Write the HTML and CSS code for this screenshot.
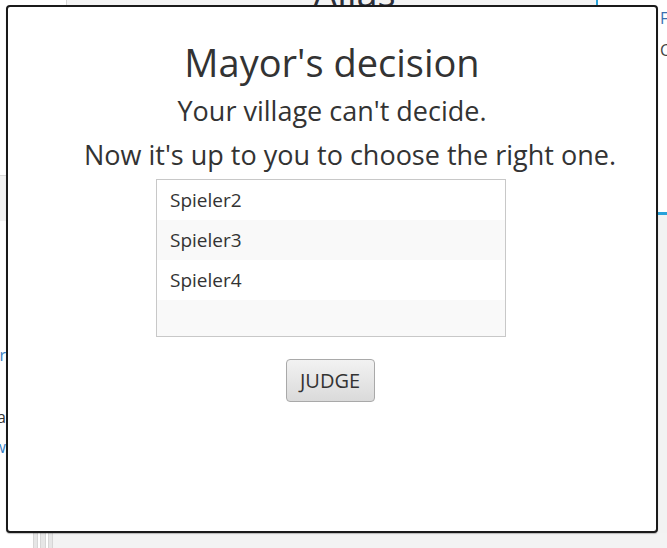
FILE: index.html
```html
<!DOCTYPE html>
<html>
<head>
<meta charset="utf-8">
<link rel="stylesheet" href="styles.css">
</head>
<body>
<div class="backdrop">
  <div class="top-row">
    <div class="seg-white w66"></div>
    <div class="seg-line"></div>
    <div class="seg-gray header"><span class="alias">Alias</span></div>
    <div class="seg-blue"></div>
    <div class="seg-white grow"></div>
  </div>
  <div class="mid-row">
    <div class="left-col">
      <div class="left-panel"></div>
      <div class="frag frag-r">r</div>
      <div class="frag frag-a">a</div>
      <div class="frag frag-w">w</div>
    </div>
    <div class="center-col"></div>
    <div class="right-col">
      <div class="rfrag rfrag-f">F</div>
      <div class="rfrag rfrag-c">C</div>
      <div class="right-spacer"></div>
      <div class="right-blue"></div>
      <div class="right-gray"></div>
    </div>
  </div>
  <div class="bottom-row">
    <div class="seg-white w33"></div>
    <div class="stripes"><i></i><i></i><i></i></div>
    <div class="seg-gray grow"></div>
  </div>
</div>

<div class="dialog">
  <h1 class="title">Mayor's decision</h1>
  <p class="line1">Your village can't decide.</p>
  <p class="line2">Now it's up to you to choose the right one.</p>
  <ul class="list">
    <li class="row">Spieler2</li>
    <li class="row odd">Spieler3</li>
    <li class="row">Spieler4</li>
    <li class="row odd empty"></li>
  </ul>
  <button class="judge">JUDGE</button>
</div>
</body>
</html>
```
FILE: styles.css
```css
* { box-sizing: border-box; }
html, body { margin: 0; padding: 0; }
body {
  width: 667px;
  height: 548px;
  overflow: hidden;
  position: relative;
  background: #fff;
  font-family: "Open Sans", "Noto Sans", sans-serif;
  color: #333;
}

/* backdrop */
.backdrop {
  display: grid;
  grid-template-rows: 5px 528px 15px;
  width: 667px;
  height: 548px;
}
.top-row, .bottom-row, .mid-row { display: flex; overflow: hidden; }
.seg-white { background: #fff; }
.seg-gray { background: #f3f3f3; }
.w66 { width: 66px; }
.w33 { width: 33px; }
.grow { flex: 1; }
.seg-line { width: 1px; background: #d6d6d6; }
.seg-blue { width: 2px; background: #27a2da; }
.header {
  width: 529px;
  display: flex;
  justify-content: center;
  overflow: hidden;
}
.alias {
  font-size: 38px;
  line-height: 38px;
  margin-top: -27px;
  color: #2b2f3a;
  margin-left: 46px;
}

.left-col { width: 6px; display: flex; flex-direction: column; overflow: hidden; }
.left-panel { margin-top: 170px; height: 46px; background: #f2f2f2; border-top: 1px solid #d9d9d9; }
.frag {
  font-size: 16px;
  line-height: 16px;
  display: flex;
  justify-content: flex-end;
  width: 6px;
  overflow: hidden;
}
.frag-r { margin-top: 126px; color: #3b82c4; }
.frag-a { margin-top: 46px; color: #333; }
.frag-w { margin-top: 14px; color: #3b82c4; }
.center-col { width: 652px; }
.right-col { width: 9px; display: flex; flex-direction: column; overflow: hidden; }
.rfrag { font-size: 16px; line-height: 16px; padding-left: 2px; }
.rfrag-f { margin-top: 5px; color: #3b6fb0; }
.rfrag-c { margin-top: 16px; color: #444; }
.right-spacer { height: 154px; }
.right-blue { height: 3px; background: #27a2da; }
.right-gray { flex: 1; background: #f2f2f2; }
.stripes { width: 20px; display: flex; gap: 2px; background: #fff; }
.stripes i { display: block; width: 6px; background: #e6e6e6; border-left: 1px solid #d6d6d6; border-right: 1px solid #d6d6d6; }

/* dialog */
.dialog {
  position: absolute;
  left: 6px;
  top: 5px;
  width: 652px;
  height: 528px;
  background: #fff;
  border: 2px solid #1a1a1a;
  border-radius: 4px;
  box-shadow: 0 1px 1px rgba(0,0,0,0.25);
  display: flex;
  flex-direction: column;
  align-items: center;
  padding-top: 31px;
}
.title {
  margin: 0;
  font-weight: 400;
  font-size: 38px;
  line-height: 48px;
  color: #333;
}
.line1, .line2 {
  margin: 0;
  font-size: 27px;
  line-height: 44px;
  color: #333;
}
.line1 { margin-top: 3px; }
.line2 { padding-left: 36px; }
.list {
  list-style: none;
  margin: 2px 0 0 -2px;
  padding: 0;
  width: 350px;
  height: 158px;
  border: 1px solid #c8c8c8;
  background: #f9f9f9;
  overflow: hidden;
}
.row {
  height: 40px;
  line-height: 40px;
  padding-left: 13px;
  font-size: 19px;
  color: #333;
  background: #fff;
}
.row.odd { background: #f9f9f9; }
.judge {
  margin: 22px 0 0 -4px;
  width: 89px;
  height: 43px;
  border: 1px solid #a9a9a9;
  border-radius: 4px;
  background: linear-gradient(#f2f2f2, #dadada);
  font-family: inherit;
  font-size: 20px;
  color: #333;
  padding: 0;
}
```
